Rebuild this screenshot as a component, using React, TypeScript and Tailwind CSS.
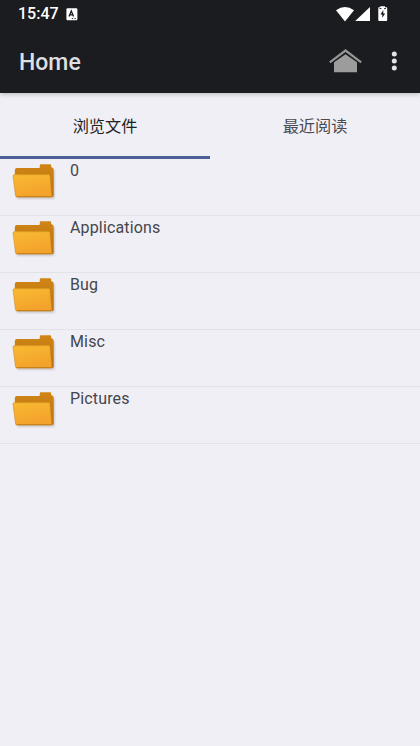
import clsx from "clsx";

const tabs = ["浏览文件", "最近阅读"];
const folders = ["0", "Applications", "Bug", "Misc", "Pictures"];

const FolderIcon = () => (
  <svg width="46" height="38" viewBox="0 0 46 38">
    <defs>
      <linearGradient id="front" x1="0" y1="0" x2="0.35" y2="1">
        <stop offset="0" stopColor="#f9ba32" />
        <stop offset="1" stopColor="#f3a22b" />
      </linearGradient>
      <linearGradient id="back" x1="0" y1="0" x2="0" y2="1">
        <stop offset="0" stopColor="#d08514" />
        <stop offset="1" stopColor="#b97212" />
      </linearGradient>
      <filter id="soft" x="-10%" y="-10%" width="120%" height="130%">
        <feGaussianBlur stdDeviation="0.9" />
      </filter>
    </defs>
    <path
      d="M4 15 L42.3 6 V34.4 H5 Z"
      fill="#6b5a48"
      opacity="0.35"
      filter="url(#soft)"
    />
    <path
      d="M2.8 14 V6.2 Q2.8 4 5 4 H26.8 Q27.8 4 27.8 3 V1.4 Q27.8 0.2 29 0.2 H38 Q39.2 0.2 39.2 1.4 V3 L40.6 3.7 Q41.7 4.3 41.7 5.8 V31.6 Q41.7 33 40.2 33 H20 Z"
      fill="url(#back)"
    />
    <path
      d="M2 10.8 H36.8 Q37.9 10.8 38 12.2 L39.8 31.6 Q39.9 33 38.6 33 H5 Q3.7 33 3.5 31.8 L1 12.2 Q0.8 10.8 2 10.8 Z"
      fill="url(#front)"
      stroke="#c98318"
      strokeWidth="0.5"
    />
    <path d="M2.2 11.1 H37.2" stroke="#f1b634" strokeWidth="0.8" />
    <path d="M4.8 32.6 H39" stroke="#bd7914" strokeWidth="0.8" />
  </svg>
);

const StatusBar = () => (
  <div className="h-7 flex items-center pl-[18px] pr-8 text-white">
    <span className="text-base leading-7 font-medium">15:47</span>
    <svg className="ml-[7px]" width="12" height="13" viewBox="0 0 12 13">
      <rect x="0.4" y="0.2" width="11" height="12" rx="1.2" fill="#fff" />
      <path
        d="M3 8.6 L5.3 3 L7.6 8.6 M3.8 6.8 H6.8"
        fill="none"
        stroke="#1b1c1f"
        strokeWidth="1.3"
      />
      <path d="M5.8 10.6 H7.2 M8.4 10.6 H9.8" stroke="#1b1c1f" strokeWidth="0.9" />
    </svg>
    <div className="ml-auto flex items-center">
      <svg width="52" height="16" viewBox="0 0 52 16">
        <path d="M0 4.2 Q9 -2.2 18 4.2 L9.4 15 Q9 15.4 8.6 15 Z" fill="#fff" />
        <path d="M34 1 V15 H19.2 Z" fill="#fff" />
        <path
          d="M42.3 2 Q42.3 1.3 43 1.3 H44.3 V0.3 H49 V1.3 H50.4 Q51.2 1.3 51.2 2 V14.2 Q51.2 15 50.4 15 H43 Q42.3 15 42.3 14.2 Z"
          fill="#fff"
        />
        <path d="M47.3 4 L44.4 8.4 H46.3 V11.8 L49.2 7.4 H47.3 Z" fill="#1b1c1f" />
        <path d="M43.6 2.6 H45.4 M48.1 2.6 H49.9" stroke="#1b1c1f" strokeWidth="1" />
      </svg>
    </div>
  </div>
);

const App: React.FC = () => {
  return (
    <div className="w-full h-screen flex flex-col overflow-hidden bg-[#f0eff6] font-[Roboto,'Noto_Sans_CJK_SC',sans-serif]">
      <header className="relative z-10 h-[93px] shrink-0 bg-[#1b1c1f] shadow-[0_1px_5px_rgba(0,0,0,0.25)]">
        <StatusBar />
        <div className="h-[65px] flex items-center pl-[19px] pr-[23px]">
          <h1 className="text-[23px] leading-[65px] font-medium text-[#dedfe2] pt-[3px]">
            Home
          </h1>
          <svg
            className="ml-auto mr-[29px]"
            width="33"
            height="24"
            viewBox="0 0 33 24"
          >
            <path
              d="M0.8 13.4 L16.5 1.5 L32.2 13.4"
              fill="none"
              stroke="#959596"
              strokeWidth="2.2"
            />
            <path d="M5 13.2 L16.5 5.2 L28 13.2 V23.3 H5 Z" fill="#9c9c9d" />
          </svg>
          <svg width="6" height="20" viewBox="0 0 6 20" fill="#e3e3e6">
            <circle cx="3.3" cy="2.9" r="2.5" />
            <circle cx="3.3" cy="9.9" r="2.5" />
            <circle cx="3.3" cy="16.9" r="2.5" />
          </svg>
        </div>
      </header>
      <nav className="h-[66px] shrink-0 grid grid-cols-2">
        {tabs.map((tab, index) => (
          <button
            key={tab}
            className={clsx(
              "border-b-[3px] pt-1.5 text-[16.2px] font-normal",
              index === 0
                ? "border-[#4c5f98] text-[#1f1f24]"
                : "border-transparent text-[#4a4a50]"
            )}
          >
            {tab}
          </button>
        ))}
      </nav>
      <ul>
        {folders.map((folder) => (
          <li
            key={folder}
            className="h-[57px] flex items-start border-b border-[#e2e2e9] pl-3 pt-[5px]"
          >
            <FolderIcon />
            <span className="ml-3 -mt-[5px] text-base leading-6 tracking-[0.15px] text-[#45464c]">
              {folder}
            </span>
          </li>
        ))}
      </ul>
    </div>
  );
};

export default App;
